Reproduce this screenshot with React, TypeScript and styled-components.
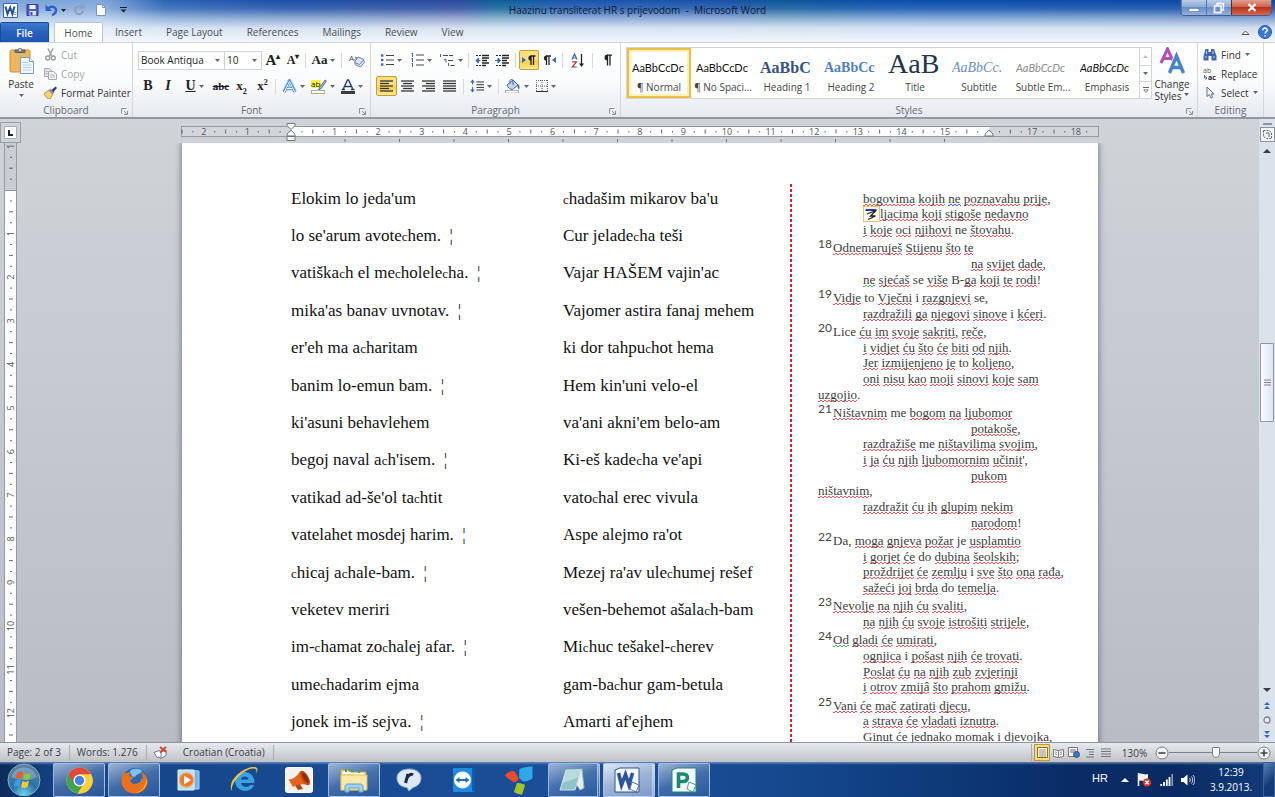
import React from 'react';
import styled, { createGlobalStyle, css } from 'styled-components';

const Global = createGlobalStyle`
  *, *::before, *::after { box-sizing: border-box; }
  html, body, #root { height: 100%; margin: 0; }
  body { font-family: "Open Sans", "Noto Sans", sans-serif; font-size: 10px; color: #333; overflow: hidden; }
  button, input, select { font: inherit; color: inherit; margin: 0; }
  button { border: 0; padding: 0; background: none; white-space: nowrap; }
  p, h1, h2 { margin: 0; font-weight: normal; font-size: inherit; }
  svg { display: block; flex: none; }
`;

const Shell = styled.div`
  display: flex;
  flex-direction: column;
  height: 100vh;
  overflow: hidden;
`;

/* ---------- window frame and tabs ---------- */

const Frame = styled.header`
  flex: none;
  background:
    linear-gradient(180deg, rgba(240, 246, 252, 0) 0, rgba(240, 246, 252, 0.16) 9px, rgba(240, 246, 252, 0.54) 18px, rgba(240, 246, 252, 0.88) 28px, #f3f7fc 42px),
    linear-gradient(90deg, #7ba3d8 0, #7fa6da 8%, #2a62b4 13%, #1a4fa5 22%, #2a489c 36%, #0a6098 39%, #1a55ac 44%, #1750a8 57%, #0b5596 61%, #0a4fae 70%, #0945a0 100%);
`;

const TitleBar = styled.div`
  display: grid;
  grid-template-columns: 1fr auto 1fr;
  align-items: center;
  height: 22px;
  padding-bottom: 2px;
`;

const QuickAccess = styled.div`
  display: flex;
  align-items: center;
  gap: 4px;
  padding-left: 1px;
`;

const QuickButton = styled.button`
  display: flex;
  align-items: center;
  justify-content: center;
  gap: 3px;
  height: 18px;
  min-width: 18px;
`;

const WindowTitle = styled.h1`
  color: #0c1a33;
  white-space: pre;
`;

const WindowButtons = styled.div`
  display: flex;
  align-self: start;
  justify-self: end;
  height: 16px;
  margin-right: 3px;
  border: 1px solid #3f5f92;
  border-top: 0;
  border-radius: 0 0 5px 5px;
  overflow: hidden;
`;

const WindowButton = styled.button<{ $close?: boolean }>`
  display: flex;
  align-items: center;
  justify-content: center;
  width: ${(p) => (p.$close ? 40 : 25)}px;
  border-left: 1px solid ${(p) => (p.$close ? '#5c2a2a' : '#5577a8')};
  background: ${(p) =>
    p.$close
      ? 'linear-gradient(180deg, #e0a090 0, #d0604c 45%, #b8321c 50%, #d4674a 100%)'
      : 'linear-gradient(180deg, #b9cde8 0, #8eabd6 45%, #668fc8 50%, #93b2dc 100%)'};
`;

const TabRow = styled.nav`
  display: flex;
  align-items: stretch;
  height: 20px;
`;

const Tab = styled.button<{ $kind?: 'file' | 'active' }>`
  padding: 0 12px;
  color: #4a4f57;
  ${(p) =>
    p.$kind === 'file' &&
    css`
      width: 49px;
      margin-right: 5px;
      color: #fff;
      font-weight: 600;
      background: linear-gradient(180deg, #3f7ad0 0, #2560bb 50%, #1f57b0 100%);
      border: 1px solid #1a4a9a;
      border-bottom: 0;
      border-radius: 2px 2px 0 0;
    `}
  ${(p) =>
    p.$kind === 'active' &&
    css`
      width: 49px;
      padding: 0;
      background: #fff;
      border: 1px solid #b9c6d8;
      border-bottom: 0;
      border-radius: 2px 2px 0 0;
    `}
`;

const TabTools = styled.div`
  display: flex;
  align-items: center;
  gap: 8px;
  margin-left: auto;
  padding-right: 3px;
`;

/* ---------- ribbon ---------- */

const Ribbon = styled.section`
  display: flex;
  flex: none;
  height: 77px;
  background: linear-gradient(180deg, #fff 0, #fbfcfd 50%, #eceff3 85%, #e6eaef 100%);
  border-top: 1px solid #c9d3e0;
  border-bottom: 2px solid #9299a3;
`;

const Group = styled.div<{ $w?: number }>`
  display: flex;
  flex-direction: column;
  flex: ${(p) => (p.$w ? `none` : '1')};
  width: ${(p) => (p.$w ? `${p.$w}px` : 'auto')};
  min-width: 0;
  border-right: 1px solid #d3d7dd;
`;

const GroupBody = styled.div<{ $tight?: boolean }>`
  display: flex;
  flex: 1;
  min-height: 0;
  padding: ${(p) => (p.$tight ? 2 : 4)}px 5px 0;
`;

const GroupFooter = styled.div`
  position: relative;
  height: 14px;
  line-height: 14px;
  text-align: center;
  color: #666c75;
`;

const Launcher = styled.button`
  position: absolute;
  right: 4px;
  bottom: 2px;
`;

const Stack = styled.div<{ $indent?: boolean }>`
  display: flex;
  flex-direction: column;
  padding-left: ${(p) => (p.$indent ? 7 : 0)}px;
`;

const BigButton = styled.button`
  display: flex;
  flex-direction: column;
  align-items: center;
  align-self: flex-start;
  line-height: 12px;
  svg:first-child { margin-bottom: 3px; }
`;

const PasteButton = styled(BigButton)`
  min-width: 32px;
  padding-top: 2px;
`;

const ChangeStyles = styled(BigButton)`
  flex: 1;
`;

const StylesLabel = styled.span`
  display: flex;
  align-items: center;
  gap: 3px;
`;

const RibbonEnd = styled.div`
  width: 11px;
`;

const SmallButton = styled.button<{ $dim?: boolean }>`
  display: flex;
  align-items: center;
  gap: 4px;
  height: 19px;
  color: ${(p) => (p.$dim ? '#a0a3a8' : '#333')};
`;

const ToolRow = styled.div`
  display: flex;
  align-items: center;
  height: 26px;
`;

const ToolButton = styled.button<{ $w?: number; $on?: boolean }>`
  display: flex;
  align-items: center;
  justify-content: center;
  gap: 3px;
  width: ${(p) => p.$w ?? 20}px;
  height: 20px;
  color: #222;
  ${(p) =>
    p.$on &&
    css`
      background: linear-gradient(180deg, #fbdf7a 0, #fbe08a 40%, #fbd04c 60%, #fde98f 100%);
      border: 1px solid #c69a3c;
      border-radius: 2px;
    `}
`;

const Divider = styled.span<{ $m?: number }>`
  width: 1px;
  height: 15px;
  margin: 0 ${(p) => p.$m ?? 4}px;
  background: #d5d8dd;
`;

const Glyph = styled.span<{ $size?: number; $italic?: boolean; $line?: string }>`
  font-family: "Liberation Serif", serif;
  font-weight: bold;
  font-size: ${(p) => p.$size ?? 14}px;
  line-height: 16px;
  font-style: ${(p) => (p.$italic ? 'italic' : 'normal')};
  text-decoration: ${(p) => p.$line ?? 'none'};
  sub, sup { font-size: 8px; line-height: 0; }
`;

const Combo = styled.select<{ $w: number }>`
  appearance: none;
  width: ${(p) => p.$w}px;
  height: 19px;
  padding: 0 2px;
  border: 1px solid #cdd1d8;
  border-radius: 0;
  background: #fff;
  color: #222;
`;

const ComboBox = styled.span`
  display: flex;
  align-items: center;
  & + & select { border-left: 0; }
  svg { margin-left: -10px; margin-right: 5px; pointer-events: none; }
`;

const Gallery = styled.div`
  display: flex;
  flex: none;
  height: 52px;
  border: 1px solid #d0d5dc;
  background: #fff;
`;

const StyleTile = styled.button<{ $on?: boolean }>`
  display: flex;
  flex-direction: column;
  align-items: center;
  width: 64px;
  padding: 0 3px;
  overflow: hidden;
  ${(p) =>
    p.$on &&
    css`
      outline: 2px solid #eebf45;
      outline-offset: -2px;
      box-shadow: inset 0 0 0 4px #fdf0b8;
    `}
`;

const Preview = styled.span<{ $font?: string; $size?: number; $color?: string; $bold?: boolean; $italic?: boolean }>`
  width: 54px;
  height: 29px;
  overflow: hidden;
  text-align: left;
  line-height: ${(p) => ((p.$size ?? 11) > 20 ? 31 : 39)}px;
  font-family: ${(p) => p.$font ?? 'Lato, sans-serif'};
  font-size: ${(p) => p.$size ?? 11}px;
  font-weight: ${(p) => (p.$bold ? 'bold' : 'normal')};
  font-style: ${(p) => (p.$italic ? 'italic' : 'normal')};
  color: ${(p) => p.$color ?? '#111'};
`;

const TileLabel = styled.span`
  line-height: 20px;
  white-space: nowrap;
  color: #444;
`;

const GalleryScroll = styled.div`
  display: grid;
  grid-template-rows: 1fr 1fr 1fr;
  width: 12px;
  border-left: 1px solid #d0d5dc;
  button { display: flex; align-items: center; justify-content: center; }
  button + button { border-top: 1px solid #d0d5dc; }
`;

/* ---------- document area ---------- */

const Workspace = styled.main`
  display: grid;
  grid-template-columns: 21px 1fr 16px;
  grid-template-rows: 24px 1fr;
  flex: 1;
  min-height: 0;
  background: linear-gradient(180deg, #d0d3d8 0, #c6cad1 40%, #b9bcc4 100%);
`;

const Corner = styled.button`
  align-self: end;
  width: 21px;
  height: 21px;
  border: 1px solid #9a9ea6;
  display: flex;
  align-items: center;
  justify-content: center;
`;

const RulerRow = styled.div`
  display: flex;
  justify-content: center;
  padding-top: 3px;
`;

const SideRuler = styled.div`
  overflow: hidden;
  padding-left: 4px;
`;

const Canvas = styled.div`
  display: flex;
  justify-content: center;
  align-items: flex-start;
  overflow: hidden;
  min-height: 0;
`;

const Scrollbar = styled.div`
  grid-column: 3;
  grid-row: 1 / 3;
  display: flex;
  flex-direction: column;
  align-items: center;
  background: #dbe2ec;
  button { display: flex; align-items: center; justify-content: center; width: 15px; height: 15px; flex: none; }
`;

const SplitHandle = styled.span`
  width: 9px;
  height: 2px;
  margin-top: 4px;
  background: #8e949e;
`;

const RulerToggle = styled.button`
  margin: 2px 0 1px;
  border: 1px solid #8e949e;
  background: #f2f4f8;
`;

const Space = styled.span<{ $grow: number }>`
  flex: ${(p) => p.$grow};
`;

const Thumb = styled.div`
  display: flex;
  align-items: center;
  justify-content: center;
  width: 14px;
  height: 79px;
  border: 1px solid #8b96a8;
  border-radius: 1px;
  background: linear-gradient(90deg, #fafbfe, #dfe5f2);
`;

const Paper = styled.article`
  display: grid;
  grid-template-columns: 272px 227px 3px 1fr;
  flex: none;
  width: 916px;
  padding: 37px 16px 40px 109px;
  background: #fff;
  box-shadow: 0 0 6px 1px rgba(60, 64, 72, 0.55);
`;

const VerseColumn = styled.div`
  display: grid;
  grid-auto-rows: 1fr;
  align-items: center;
  height: 561px;
  font-family: "Liberation Serif", serif;
  font-size: 17px;
  color: #111;
  white-space: pre;
`;

const SmallC = styled.span`
  font-size: 13px;
`;

const DottedRule = styled.div`
  align-self: stretch;
  width: 2px;
  margin-top: 4px;
  background: repeating-linear-gradient(180deg, #cc2430 0 3px, transparent 3px 5px);
`;

const Translation = styled.div`
  display: flex;
  flex-direction: column;
  height: 565px;
  padding: 11px 0 0 25px;
  font-family: "Liberation Serif", serif;
  font-size: 13px;
  line-height: 16px;
  color: #3c3c3c;
  white-space: pre;
`;

const Line = styled.p<{ $in: number }>`
  display: flex;
  align-items: flex-end;
  flex: ${(p) => (p.$in === 1 ? 7 : 6)} 0 0;
  min-height: 0;
  padding-left: ${(p) => [0, 0, 45, 153][p.$in]}px;
`;

const VerseNo = styled.span`
  width: 15px;
  padding-bottom: 4px;
  font-family: Lato, "Open Sans", sans-serif;
  font-size: 12px;
  color: #444;
`;

const Marked = styled.span<{ $c: string }>`
  --c: ${(p) => p.$c};
  background:
    linear-gradient(90deg, var(--c) 50%, transparent 50%) 0 100% / 4px 1px repeat-x,
    linear-gradient(90deg, transparent 50%, var(--c) 50%) 0 calc(100% - 1px) / 4px 1px repeat-x;
`;

const PasteBadge = styled.button`
  width: 17px;
  height: 16px;
  border: 1px solid #e5c66b;
  background: #fffdf3;
`;

/* ---------- status bar ---------- */

const StatusBar = styled.footer`
  display: flex;
  align-items: center;
  flex: none;
  height: 20px;
  border-top: 1px solid #8d939c;
  background: linear-gradient(180deg, #e6e9ee 0, #d3d6da 50%, #c0c2c6 100%);
  color: #3b3f45;
`;

const StatusItem = styled.button`
  height: 15px;
  line-height: 15px;
  padding: 0 8px 0 7px;
  border-right: 1px solid #a9adb3;
`;

const ProofButton = styled.button`
  padding: 0 8px 0 6px;
`;

const ViewButtons = styled.div`
  display: flex;
  margin-left: auto;
  padding-left: 2px;
  border-left: 1px solid #a9adb3;
`;

const ViewButton = styled.button<{ $on?: boolean }>`
  display: flex;
  align-items: center;
  justify-content: center;
  width: 16px;
  height: 17px;
  ${(p) =>
    p.$on &&
    css`
      border: 1px solid #c6932f;
      background: #fbdc7c;
    `}
`;

const ZoomLabel = styled.button`
  width: 41px;
  text-align: center;
`;

const ZoomTools = styled.div`
  display: flex;
  align-items: center;
  padding-right: 4px;
`;

const ZoomSlider = styled.input`
  appearance: none;
  width: 88px;
  height: 14px;
  background: linear-gradient(#7d828a, #7d828a) center / 100% 1px no-repeat;
  &::-webkit-slider-thumb {
    appearance: none;
    width: 8px;
    height: 11px;
    border: 1px solid #7b8088;
    border-radius: 1px 1px 4px 4px;
    background: #f7f8fa;
  }
`;

/* ---------- task bar ---------- */

const TaskBar = styled.nav`
  display: flex;
  flex: none;
  height: 35px;
  color: #fff;
  background:
    linear-gradient(180deg, rgba(140, 175, 215, 0.65) 0, rgba(140, 175, 215, 0) 3px),
    linear-gradient(90deg, #0d2b5c 0, #15458a 5%, #1a4f98 45%, #164a90 60%, #0e3c7c 72%, #0a2c66 84%, #0a2a62 92%, #123c7c 100%);
`;

const StartButton = styled.button`
  display: flex;
  align-items: center;
  justify-content: center;
  width: 48px;
  margin-right: 5px;
`;

const TaskButton = styled.button<{ $open?: boolean; $front?: boolean; $stack?: boolean }>`
  display: flex;
  align-items: center;
  justify-content: center;
  width: 52px;
  height: 34px;
  margin: 1px 3px 0 0;
  ${(p) =>
    p.$open &&
    css`
      border: 1px solid rgba(190, 210, 235, 0.75);
      border-radius: 2px;
      background: ${p.$front
        ? 'linear-gradient(160deg, #dfe7f3 0, #9db4d6 50%, #7f9cc8 100%)'
        : 'linear-gradient(160deg, rgba(200,215,235,.75) 0, rgba(110,145,195,.5) 50%, rgba(70,110,170,.4) 100%)'};
    `}
  ${(p) =>
    p.$stack &&
    css`
      border-right-width: 3px;
      border-right-style: double;
      padding-right: 2px;
    `}
`;

const Tray = styled.div`
  display: flex;
  align-items: center;
  gap: 8px;
  margin-left: auto;
`;

const Language = styled.button`
  margin: 0 5px 3px 0;
  font-family: "Liberation Sans", sans-serif;
  font-size: 11px;
`;

const Clock = styled.button`
  width: 56px;
  line-height: 15px;
  text-align: center;
`;

const ShowDesktop = styled.button`
  align-self: stretch;
  width: 12px;
  margin-left: -4px;
  border: 1px solid #3c6296;
  background: linear-gradient(135deg, #5a82b6, #143b78 60%);
`;

/* ---------- icons ---------- */

const Down = ({ c = '#666' }: { c?: string }) => (
  <svg width="5" height="3" viewBox="0 0 5 3"><path d="M0 0h5L2.500 3z" fill={c} /></svg>
);

const Svg = ({ w = 16, h = 16, vb, children }: { w?: number; h?: number; vb?: string; children: React.ReactNode }) => (
  <svg width={w} height={h} viewBox={vb ?? `0 0 ${w} ${h}`} fill="none" aria-hidden="true">{children}</svg>
);

const WordMark = () => (
  <Svg w={15} h={15}>
    <path d="M0.500 0.500h14v14h-14z" fill="#fff" stroke="#3b66a8" />
    <path d="M2.500 3.500l2 7.500L7.200 4.500l2.200 6.500L11.500 3.500" stroke="#1f4f9c" strokeWidth="2" />
    <path d="M10.500 9.500h3M10.500 11.500h3" stroke="#7c9ccc" />
  </Svg>
);
const Save = () => (
  <Svg w={13} h={12}>
    <path d="M1 .5h11v11H1z" fill="#4c5fc0" stroke="#2e3f95" />
    <path d="M3.500 1h6v4h-6z" fill="#eef2ff" /><path d="M3.500 7h6.500v4.500H3.500z" fill="#dfe4f5" /><path d="M4.500 8h2v3h-2z" fill="#3a4aa0" />
  </Svg>
);
const Undo = () => (
  <Svg w={13} h={12}>
    <path d="M3 4.500C6 1.500 11 2.500 11 6.500c0 2-1.500 3.500-4 4.500" stroke="#2e62c2" strokeWidth="2.400" />
    <path d="M0.500 .5v6.500h6.500z" fill="#2e62c2" />
  </Svg>
);
const Redo = () => (
  <Svg w={12} h={12}>
    <path d="M8.500 3A4 4 0 1 0 10 6.500" stroke="#8ba0bf" strokeWidth="2" /><path d="M6 4.500h5.500V-.5z" fill="#8ba0bf" />
  </Svg>
);
const NewPage = () => (
  <Svg w={10} h={12}><path d="M.5.5h6l3 3v8h-9z" fill="#fff" stroke="#7a92b5" /><path d="M6.500.5v3h3" stroke="#7a92b5" /></Svg>
);
const Customize = () => (
  <Svg w={7} h={6}><path d="M0 .5h7" stroke="#222" /><path d="M.5 2.500h6l-3 3z" fill="#222" /></Svg>
);
const MoreIcon = () => (
  <Svg w={6} h={6}><path d="M0 .5h6" stroke="#666" /><path d="M.8 2.800h4.400L3 5.500z" stroke="#666" strokeWidth=".8" /></Svg>
);
const LauncherIcon = () => (
  <Svg w={7} h={7}><path d="M.5 5.500v-5h5M3 3l3 3M6.500 3v3.500H3" stroke="#8b9099" /></Svg>
);
const PasteIcon = () => (
  <Svg w={25} h={28}>
    <rect x="1" y="3" width="20" height="22" rx="1.500" fill="#edb75d" stroke="#c98d33" />
    <path d="M6 5.500V3h2.500a3 3 0 0 1 5 0H16v2.500z" fill="#7d7f86" stroke="#5d5f66" /><circle cx="11" cy="3" r="1" fill="#fff" />
    <path d="M11.500 10.500h9l4 4v12h-13z" fill="#f5f9fe" stroke="#7b9cc7" /><path d="M20.500 10.500v4h4" stroke="#7b9cc7" fill="#fff" />
    <path d="M13.500 15.500h6M13.500 18h9M13.500 20.500h9M13.500 23h9" stroke="#b4cbe6" />
  </Svg>
);
const CutIcon = () => (
  <Svg w={13} h={13}>
    <path d="M4 0.500l4 8M9 .5l-4 8" stroke="#9b9ea4" strokeWidth="1.500" />
    <circle cx="3.700" cy="10" r="2" stroke="#9b9ea4" strokeWidth="1.400" /><circle cx="9.300" cy="10" r="2" stroke="#9b9ea4" strokeWidth="1.400" />
  </Svg>
);
const CopyIcon = () => (
  <Svg w={13} h={12}>
    <path d="M.5.5h5l2 2v6h-7z" fill="#e4e5e8" stroke="#a5a8ae" /><path d="M4.500 3.500h5l3 2.500v5.500h-8z" fill="#f1f1f3" stroke="#a5a8ae" />
    <path d="M6 7h5M6 9h5M2 3.500h2.500M2 5.500h2" stroke="#b9bbc0" />
  </Svg>
);
const PainterIcon = () => (
  <Svg w={13} h={13}>
    <path d="M0 8l5-4 4 4-3 5c-3 0-4-2-6-5z" fill="#f3d36a" stroke="#b08d2c" strokeWidth=".8" />
    <path d="M4.500 4.500l2-2 4 4-2 2z" fill="#8891a8" /><path d="M7.500 4l4-3.500L13 2 9.500 6z" fill="#39405a" />
  </Svg>
);
const ClearFormat = () => (
  <Svg w={16} h={16}>
    <text x="0" y="9" fontFamily="Open Sans, sans-serif" fontSize="8" fill="#445">Aa</text>
    <path d="M9 5l5 2 1.500 3-4 5-5-2-1-2.500z" fill="#dfe6f3" stroke="#6f83ab" /><path d="M5.500 10.500l5 2 4.500-5" stroke="#6f83ab" />
  </Svg>
);
const TextEffects = () => (
  <Svg w={15} h={15}><path d="M2 13L7.500 2 13 13M4.500 9.500h6" stroke="#9ccaf0" strokeWidth="4" strokeLinejoin="round" /><path d="M2 13L7.500 2 13 13M4.500 9.500h6" stroke="#3f86cc" strokeWidth="2.200" /><path d="M2.300 13L7.500 2.500 12.700 13M5 9.500h5" stroke="#fff" strokeWidth="1" /></Svg>
);
const Highlighter = () => (
  <Svg w={16} h={15}>
    <rect x="0" y="1" width="10" height="8" fill="#f7f24a" />
    <text x="0" y="8" fontFamily="Open Sans, sans-serif" fontSize="8" fill="#222">ab</text>
    <path d="M14 1L8.500 8.500 7.500 11l2.500-1.300L15.500 2z" fill="#9db8da" stroke="#44608c" strokeWidth=".8" />
    <rect x=".5" y="11.500" width="13" height="3" fill="#fff" stroke="#a9b48a" />
  </Svg>
);
const FontColor = () => (
  <Svg w={14} h={15}>
    <path d="M2 10.500L6.500 1h1L12 10.500M4 7.500h6M.8 10.500H4M9.800 10.500h3.700" stroke="#27406e" strokeWidth="1.400" /><rect y="12" width="14" height="3" fill="#3a3a44" />
  </Svg>
);
const Bars = ({ rows, c = '#333' }: { rows: [number, number][]; c?: string }) => (
  <Svg w={13} h={12}>{rows.map(([x, w], i) => <path key={i} d={`M${x} ${i * 2.5 + 1}h${w}`} stroke={c} strokeWidth="1.300" />)}</Svg>
);
const Bullets = () => (
  <Svg w={13} h={12}>
    {[1.500, 6, 10.500].map((y) => <g key={y}><rect x="0" y={y - 1.200} width="2.400" height="2.400" fill="#3f63b0" /><path d={`M5 ${y}h8`} stroke="#444" /></g>)}
  </Svg>
);
const Numbering = () => (
  <Svg w={13} h={14}>
    {[2, 7, 12].map((y) => <g key={y}><path d={`M1.500 ${y - 2}v4M.500 ${y - 1.500}h1`} stroke="#3f63b0" /><path d={`M5 ${y}h8`} stroke="#444" /></g>)}
  </Svg>
);
const Multilevel = () => (
  <Svg w={15} h={13}>
    <path d="M.5 0v3M4 6l2-1v3.500M8.500 9v3" stroke="#3f63b0" /><path d="M3 1.500h10M8 6.500h6M10.500 11.500h4" stroke="#444" strokeDasharray="5 1" />
  </Svg>
);
const Indent = ({ out }: { out?: boolean }) => (
  <Svg w={14} h={13}>
    <path d="M1 1.500h5M1 11.500h5" stroke="#222" strokeDasharray="2 1" /><path d="M7 1.500h7M7 4h7M7 6.500h5M7 9h7M7 11.500h4" stroke="#222" strokeWidth="1.300" />
    <path d={out ? 'M5.500 6.500H2M3.500 4L.8 6.500 3.500 9z' : 'M0 6.500h4M3 4l2.700 2.500L3 9z'} stroke="#3566c0" fill="#3566c0" />
  </Svg>
);
const Pilcrow = () => (
  <Svg w={10} h={12}><path d="M5 1.200h5M5.500 1v10.500M8 1v10.500" stroke="#222" strokeWidth="1.300" /><path d="M5.500.6a2.800 2.800 0 0 0 0 5.900z" fill="#222" /></Svg>
);
const Direction = ({ rtl }: { rtl?: boolean }) => (
  <Svg w={14} h={12}>
    <path d={rtl ? 'M14 3v6L10 6z' : 'M0 3v6l4-3z'} fill="#3566c0" />
    <g transform={rtl ? 'translate(0 1)' : 'translate(4.500 1)'}><path d="M4 1h5M4.500 1v9M7 1v9" stroke="#222" strokeWidth="1.300" /><path d="M4.500.5a2.500 2.500 0 0 0 0 5.200z" fill="#222" /></g>
  </Svg>
);
const SortIcon = () => (
  <Svg w={13} h={15}>
    <path d="M1 6.500L3.500 1 6 6.500M2 5h3" stroke="#3566c0" strokeWidth="1.200" /><path d="M1.200 8.800h4.300L1.200 14h4.600" stroke="#a03a4a" strokeWidth="1.200" />
    <path d="M10.500 1v11" stroke="#222" strokeWidth="1.300" /><path d="M8 10.500h5L10.500 14z" fill="#222" />
  </Svg>
);
const Spacing = () => (
  <Svg w={14} h={14}>
    <path d="M2.500 1.500v11" stroke="#3566c0" strokeDasharray="4 2.500" /><path d="M.2 3.500L2.500.5l2.300 3zM.2 10.500l2.300 3 2.300-3z" fill="#3566c0" />
    <path d="M6.500 3h7.500M6.500 5.700h7.500M6.500 8.400h7.500M6.500 11h7.500" stroke="#333" />
  </Svg>
);
const Shading = () => (
  <Svg w={16} h={14}>
    <path d="M2 6l6-5 5 5-5.500 4.500c-2 0-5-2-5.500-4.500z" fill="#c5d7ee" stroke="#3e67a6" /><path d="M5 5V1.500C6 0 8 0 8 2v4" stroke="#3e67a6" />
    <path d="M13 5c1.500 1.500 2 3.500 1 5.500-1.500-1-1.500-3.500-1-5.500z" fill="#3e67a6" /><rect x=".5" y="11.500" width="13" height="2.500" fill="#fff" stroke="#98a0ac" strokeWidth=".8" />
  </Svg>
);
const Borders = () => (
  <Svg w={12} h={12}><path d="M.5 0v11M11.500 0v11M6 0v11M0 .5h12M0 6h12" stroke="#666" strokeDasharray="1 1" /><path d="M0 11.500h12" stroke="#333" /></Svg>
);
const ChangeStylesIcon = () => (
  <Svg w={26} h={28}>
    <path d="M2 16L8.500 2 15 16M4.500 11.500h8" stroke="#b24fb4" strokeWidth="3" /><path d="M10 26L17.500 9 25 26M13 20.500h9.500" stroke="#f6f8fc" strokeWidth="5" />
    <path d="M10.500 26L17.500 9 24.500 26M13 20.500h9" stroke="#4a83cc" strokeWidth="3.400" />
  </Svg>
);
const Binoculars = () => (
  <Svg w={14} h={12}>
    <path d="M2.500 0h3v3h2.500V0h3l2.500 7v4.500H8.500V7h-3v4.500H.5V7z" fill="#3e67ae" /><path d="M2 8h2M10 8h2M3.500 2v3M10 2v3" stroke="#bcd0ee" />
  </Svg>
);
const ReplaceIcon = () => (
  <Svg w={14} h={14}>
    <text x="0" y="6" fontFamily="Open Sans, sans-serif" fontSize="7" fill="#555">ab</text>
    <text x="5" y="13" fontFamily="Open Sans, sans-serif" fontSize="7" fontWeight="700" fill="#222">ac</text>
    <path d="M1.500 8v3H4M2.500 9.500l1.500 1.500-1.500 1.500" stroke="#3566c0" />
  </Svg>
);
const Cursor = () => (
  <Svg w={14} h={13}><path d="M4 1v9.500l2.300-2L8 12l1.700-.8L8.200 8H11z" fill="#fff" stroke="#5b6f96" /></Svg>
);
const Help = () => (
  <Svg w={14} h={14}>
    <circle cx="7" cy="7" r="6.500" fill="#3a78d4" stroke="#2a5aa8" /><path d="M4.800 5.200c0-3 4.600-2.700 4.400 0C9.100 6.500 7.200 6.800 7.200 8.500M7.200 10v1.600" stroke="#fff" strokeWidth="1.500" />
  </Svg>
);
const ProofIcon = () => (
  <Svg w={15} h={13}>
    <path d="M1 6.500l5-2 2 1.500 5-2v5.500l-5 3-2-1.500-2 .5z" fill="#fff" stroke="#6379a8" /><path d="M8 6v6" stroke="#6379a8" /><path d="M7 1l6 5M13 1L7 6.500" stroke="#d2452c" strokeWidth="1.800" />
  </Svg>
);

const Orb = () => (
  <Svg w={34} h={34}>
    <defs><radialGradient id="orb" cx=".5" cy=".95" r=".9"><stop offset="0" stopColor="#6fd2ee" /><stop offset=".45" stopColor="#2a72a8" /><stop offset="1" stopColor="#5c7f9c" /></radialGradient></defs>
    <circle cx="17" cy="17" r="16" fill="url(#orb)" stroke="#7fb0cc" />
    <path d="M4 14a13.500 13.500 0 0 1 26 0c-7 4-19 4-26 0z" fill="#fff" opacity=".25" />
    <path d="M10 10c2-1.500 4-1.500 6-.5l-1.500 6.300c-2-1-4-1-6 .4z" fill="#ee5a2a" /><path d="M17.500 10.200c2 1 4 1 6.500-.2l-1.500 6.200c-2.500 1-4.500 1-6.500 0z" fill="#8cc63f" />
    <path d="M8 17.700c2-1.400 4-1.400 6-.4L12.500 23.500c-2-1-4-1-6 .3z" fill="#3f9be8" /><path d="M15.500 18c2 1 4 1 6.500 0l-1.500 6c-2.500 1.200-4.500 1.200-6.500 0z" fill="#fbc82e" />
  </Svg>
);
const Chrome = () => (
  <Svg w={27} h={27}>
    <circle cx="13.500" cy="13.500" r="13" fill="#fbd03b" />
    <path d="M13.500 13.500L2.300 7a13 13 0 0 0 9.500 19.300L17.500 17z" fill="#3fa450" />
    <path d="M13.500 7H25A13 13 0 0 1 11.800 26.400L19 16z" fill="#fbd03b" /><path d="M2.300 7A13 13 0 0 1 24.800 7.200H13.500L7.600 16z" fill="#dd4a3a" />
    <circle cx="13.500" cy="13.500" r="6" fill="#fff" /><circle cx="13.500" cy="13.500" r="4.700" fill="#4285e8" />
  </Svg>
);
const Firefox = () => (
  <Svg w={27} h={27}>
    <circle cx="14" cy="12.500" r="11.500" fill="#2a67b4" /><path d="M9 4c3-3 9-3 12 0-1 3-6 3-7 6-3 0-5-3-5-6z" fill="#7cc4ee" />
    <path d="M2.500 4.500c.5 1 1 2 2 2.300C6 5.500 8 5 10 5.500c-1.500 1-2 2-1.500 3.500 1 .5 3 .3 4 1-.5 2-3 2.500-3 4 1 3 5 3.500 8 2 2-1 3-3 2.500-5.500 1 .5 1.500 1.500 2 2.500.5-3-1-6.500-3-8.500 5 2 7.500 6 7.500 10.500C26.500 22 20 26.500 13.500 26.500 6 26.500.5 21 .5 14c0-3.500 1-7 2-9.500z" fill="#e9701c" />
    <path d="M26 11c1 7-4.500 15-12.500 15 6-1 11-5 12.500-15z" fill="#fcc83a" />
  </Svg>
);
const MediaPlayer = () => (
  <Svg w={24} h={22}>
    <path d="M8 1l14 1v18H9z" fill="#6fb7e2" stroke="#a9d8f2" /><path d="M1 1h16v20H1z" fill="#bfe0f4" stroke="#e3f3fc" />
    <circle cx="9.500" cy="11" r="7.500" fill="#ee7a22" /><circle cx="9.500" cy="11" r="7" stroke="#fbb27a" /><path d="M7 6.500v9l7-4.500z" fill="#fff" />
  </Svg>
);
const Explorer = () => (
  <Svg w={28} h={27}>
    <path d="M5 14.500a9.500 10 0 0 1 19.500 1.500H11c.5 4.500 7.500 5 9 2h4.200C21.500 26 6.500 26.500 5 14.500zM11 12.500h7.500c-.5-4-7-4-7.500 0z" fill="#3aa0e4" fillRule="evenodd" />
    <path d="M26 2.500c-4-4-19 5-23.500 16-1.500 4-.5 7 3 6.500C2 25.500-.5 22 1.500 16 5 5.500 23-3.500 27 1c1 2 0 4-1 6 .5-2 .8-3.500 0-4.500z" fill="#f1c53c" />
  </Svg>
);
const Megaphone = () => (
  <Svg w={28} h={26}>
    <rect x=".5" y=".5" width="27" height="25" rx="2" fill="#f7f2ee" stroke="#fff" /><path d="M3.500 12.500c5 0 8-3 12-8.500L24 18c-7-1.500-11-1-16 2z" fill="#e2641e" />
    <ellipse cx="20" cy="11" rx="3.500" ry="8" transform="rotate(-30 20 11)" fill="#c04a12" /><ellipse cx="20.500" cy="10.800" rx="2" ry="5.500" transform="rotate(-30 20.500 10.800)" fill="#84300e" /><path d="M10 18.500l5-1.500 3 5-5 1z" fill="#b8460f" />
  </Svg>
);
const Folder = () => (
  <Svg w={30} h={27}>
    <path d="M2 3h7l2 2h16v18H2z" fill="#f3dc8a" stroke="#c9a94c" /><path d="M4 6h10M15 7h10" stroke="#fff" strokeWidth="2" /><path d="M7 2v3M13 2.500v3M20 3v3" stroke="#4a9a54" strokeWidth="2" />
    <path d="M2 8h26v15H2z" fill="#fae9a8" stroke="#d8bd68" /><path d="M6 25v-5c0-2 1-3 3-3h12c2 0 3 1 3 3v5h-4v-4H10v4z" fill="#9fd3f0" stroke="#5aa3d0" />
  </Svg>
);
const ChatR = () => (
  <Svg w={26} h={24}>
    <path d="M13 1c7 0 12 3.500 12 9s-4 8.500-8 9.500L13 23l-2-3.500C5 19 1 15.500 1 10S6 1 13 1z" fill="#dfe9f4" stroke="#8fb0d4" /><path d="M9.500 15l2.500-9M11 10c2-3.500 4-4.500 6-3" stroke="#1b2c44" strokeWidth="3" />
  </Svg>
);
const TeamViewer = () => (
  <Svg w={24} h={26}>
    <path d="M1 1h19l3 2v22H1z" fill="#1f8ae0" /><path d="M20 1l3 2v22l-3-1z" fill="#0d5cac" /><circle cx="10.500" cy="13" r="8.500" fill="#fff" />
    <path d="M3.500 13l4-3v2h6v-2l4 3-4 3v-2h-6v2z" fill="#1f6cb8" />
  </Svg>
);
const Petals = () => (
  <Svg w={28} h={29}>
    <path d="M14 12L14.500 3c4-2 9-2.500 13-2.500V12c-3 3-8 4-10 3z" fill="#2fa8ea" /><path d="M0 9c3-3 6-4 9-4 2 2 4 5 4.500 8-2 3-3 3-5 3C5 14 2 12 0 9z" fill="#ee4b2c" />
    <path d="M9 26l3-9c3 0 7 1 8 2-1 4-2 7-3 9.500-3 0-6-1-8-2.500z" fill="#a3c52c" />
  </Svg>
);
const Notebook = () => (
  <Svg w={26} h={26}>
    <path d="M8 3l15-1 2 19-4 2z" fill="#e6eeee" stroke="#9fb4b8" /><path d="M7 3h15l-6 20H1z" fill="#8fc3c9" stroke="#c8e2e4" /><path d="M7 3h15l-2 7C15 12 9 14 3 16z" fill="#c9e4e6" opacity=".7" />
  </Svg>
);
const OfficeTile = ({ c, d }: { c: string; d: string }) => (
  <Svg w={27} h={27}>
    <path d="M1 3l5-2h19v24H1z" fill="#f5f8fc" stroke={c} /><path d={d} stroke={c} strokeWidth="3.600" /><path d="M18 15l7 3-3 7-6-3z" fill="#fff" stroke={c} strokeWidth=".8" />
  </Svg>
);

/* ---------- content ---------- */

const leftLines = [
  "Elokim lo jeda'um", "lo se'arum avotechem.  ¦", 'vatiškach el mecholelecha.  ¦', "mika'as banav uvnotav.  ¦", "er'eh ma acharitam",
  'banim lo-emun bam.  ¦', "ki'asuni behavlehem", "begoj naval ach'isem.  ¦", "vatikad ad-še'ol tachtit", 'vatelahet mosdej harim.  ¦',
  'chicaj achale-bam.  ¦', 'veketev meriri', 'im-chamat zochalej afar.  ¦', 'umechadarim ejma', 'jonek im-iš sejva.  ¦',
];
const middleLines = [
  "chadašim mikarov ba'u", 'Cur jeladecha teši', "Vajar HAŠEM vajin'ac", 'Vajomer astira fanaj mehem', 'ki dor tahpuchot hema',
  "Hem kin'uni velo-el", "va'ani akni'em belo-am", "Ki-eš kadecha ve'api", 'vatochal erec vivula', "Aspe alejmo ra'ot",
  "Mezej ra'av ulechumej rešef", 'vešen-behemot ašalach-bam', 'Michuc tešakel-cherev', 'gam-bachur gam-betula', "Amarti af'ejhem",
];

/* [ ] marks red, ‹ › blue and { } green proofing underlines; the number is the indent level */
const translation: [number, string, number?][] = [
  [2, '[bogovima] [kojih] ‹ne› [poznavahu] [prije],'], [2, '@[ljacima] [koji] [stigoše] [nedavno]'], [2, '[i] [koje] [oci] [njihovi] ne [štovahu].'],
  [1, '[Odnemaruješ] [Stijenu] [što] [te]', 18], [3, '[na] [svijet] [dade],'], [2, '{ne} [sjećaš] se [više] B-[ga] [koji] [te] [rodi]!'],
  [1, '[Vidje] to [Vječni] i [razgnjevi] se,', 19], [2, '[razdražili] [ga] [njegovi] [sinove] i [kćeri].'],
  [1, 'Lice [ću] [im] [svoje] [sakriti], [reče],', 20], [2, '[i] [vidjet] [ću] [što] [će] [biti] ‹od› [njih].'], [2, '[Jer] [izmijenjeno] [je] to [koljeno],'],
  [2, '[oni] [nisu] [kao] [moji] [sinovi] [koje] [sam]'], [0, '[uzgojio].'],
  [1, '[Ništavnim] me [bogom] [na] [ljubomor]', 21], [3, '[potakoše],'], [2, '[razdražiše] me [ništavilima] [svojim],'], [2, "[i] [ja] [ću] [njih] [ljubomornim] [učinit]',"],
  [3, '[pukom]'], [0, '[ništavnim],'], [2, '[razdražit] [ću] [ih] [glupim] [nekim]'], [3, '[narodom]!'],
  [1, 'Da, [moga] [gnjeva] [požar] je [usplamtio]', 22], [2, '[i] [gorjet] [će] do [dubina] [šeolskih];'], [2, '[proždrijet] [će] [zemlju] i [sve] [što] [ona] [rađa],'], [2, '[sažeći] [joj] [brda] do [temelja].'],
  [1, '[Nevolje] [na] [njih] [ću] [svaliti],', 23], [2, '[na] [njih] [ću] [svoje] [istrošiti] [strijele],'],
  [1, '{Od} [gladi] [će] [umirati],', 24], [2, '[ognjica] i [pošast] [njih] [će] [trovati].'], [2, '[Poslat] [ću] [na] [njih] [zub] [zvjerinji]'], [2, '[i] [otrov] [zmijâ] [što] [prahom] [gmižu].'],
  [1, '[Vani] [će] [mač] [zatirati] [djecu],', 25], [2, '[a] [strava] [će] [vladati] [iznutra].'], [2, '[Ginut] [će] [jednako] [momak] i [djevojka],'],
];

const colors: Record<string, string> = { '[': '#e0565c', '‹': '#4a5fe0', '{': '#4fae62' };

const Rich = ({ text }: { text: string }) => (
  <span>
    {text.split(/(\[[^\]]*\]|‹[^›]*›|\{[^}]*\})/).map((part, i) =>
      colors[part[0]] ? <Marked key={i} $c={colors[part[0]]}>{part.slice(1, -1)}</Marked> : part,
    )}
  </span>
);

const Verse = ({ text }: { text: string }) => (
  <p>{text.split(/(c(?=h))/).map((part, i) => (part === 'c' ? <SmallC key={i}>c</SmallC> : part))}</p>
);

const CM = 43.6;
const HRuler = () => (
  <Svg w={918} h={20}>
    <rect x=".5" y="4.500" width="917" height="10" fill="#d3d6db" stroke="#9599a1" />
    <rect x="110" y="5" width="698" height="9" fill="#fff" />
    {Array.from({ length: 21 }, (_, i) => i - 2).map((n) => {
      const x = 110 + n * CM;
      return (
        <g key={n}>
          {n !== 0 && n !== 16 && <text x={x} y="13" textAnchor="middle" fontSize="9" fontFamily="Open Sans, sans-serif" fill="#555">{Math.abs(n)}</text>}
          <path d={`M${x - CM / 4} 9v1.500M${x + CM / 4} 9v1.500M${x - CM / 2} 7.500v4`} stroke="#666" />
        </g>
      );
    })}
    {Array.from({ length: 12 }, (_, i) => 164 + i * 54.5).map((x) => <path key={x} d={`M${x} 17v3`} stroke="#777" />)}
    <path d="M106 1.500h8v2l-4 4-4-4zM106 14v-2l4-4 4 4v2zM106 14.500h8v4h-8z" fill="#f4f5f7" stroke="#777" />
    <path d="M804 14v-2l4-4 4 4v2z" fill="#f4f5f7" stroke="#777" />
  </Svg>
);
const VRuler = () => (
  <Svg w={13} h={800}>
    <rect x=".5" y="-1" width="12" height="802" fill="#fdfdfe" stroke="#9599a1" /><rect x="1" y="0" width="11" height="47" fill="#c9cdd5" /><path d="M1 47.500h11" stroke="#9599a1" />
    {Array.from({ length: 18 }, (_, i) => i - 1).map((n) => {
      const y = 47 + n * CM;
      return (
        <g key={n}>
          {n !== 0 && <text x="0" y="0" transform={`translate(10 ${y}) rotate(-90)`} textAnchor="middle" fontSize="9" fontFamily="Open Sans, sans-serif" fill="#555">{Math.abs(n)}</text>}
          <path d={`M6 ${y - CM / 4}h2M6 ${y + CM / 4}h2M5 ${y + CM / 2}h4`} stroke="#666" />
        </g>
      );
    })}
  </Svg>
);

const serif = '"Liberation Serif", serif';
const tiles = [
  { name: '¶ Normal', sample: 'AaBbCcDc', on: true },
  { name: '¶ No Spaci...', sample: 'AaBbCcDc' },
  { name: 'Heading 1', sample: 'AaBbC', font: serif, size: 16, color: '#34527f', bold: true },
  { name: 'Heading 2', sample: 'AaBbCc', font: serif, size: 14, color: '#4f81bd', bold: true },
  { name: 'Title', sample: 'AaB', font: serif, size: 28, color: '#22334f' },
  { name: 'Subtitle', sample: 'AaBbCc.', font: serif, size: 14, color: '#6a8fc0', italic: true },
  { name: 'Subtle Em...', sample: 'AaBbCcDc', color: '#8b8b8b', italic: true },
  { name: 'Emphasis', sample: 'AaBbCcDc', italic: true },
];

const Footer = ({ label, launcher = true }: { label: string; launcher?: boolean }) => (
  <GroupFooter>{label}{launcher && <Launcher aria-label={`${label} options`}><LauncherIcon /></Launcher>}</GroupFooter>
);

export default function App() {
  return (
    <Shell>
      <Global />
      <Frame>
        <TitleBar>
          <QuickAccess>
            <QuickButton aria-label="Word"><WordMark /></QuickButton>
            <QuickButton aria-label="Save"><Save /></QuickButton>
            <QuickButton aria-label="Undo"><Undo /><Down c="#222" /></QuickButton>
            <QuickButton aria-label="Redo"><Redo /></QuickButton>
            <QuickButton aria-label="New"><NewPage /></QuickButton>
            <QuickButton aria-label="Customize"><Customize /></QuickButton>
          </QuickAccess>
          <WindowTitle>Haazinu transliterat HR s prijevodom  -  Microsoft Word</WindowTitle>
          <WindowButtons>
            <WindowButton aria-label="Minimize"><Svg w={12} h={12}><rect x="1" y="6.500" width="10" height="3" fill="#fff" stroke="#44618f" strokeWidth=".5" /></Svg></WindowButton>
            <WindowButton aria-label="Restore"><Svg w={12} h={12}><path d="M4 1.500h6.500V8H4z" stroke="#fff" strokeWidth="1.300" /><path d="M1.500 4H8v6.500H1.500z" fill="#6d90c6" stroke="#fff" strokeWidth="1.600" /></Svg></WindowButton>
            <WindowButton $close aria-label="Close"><Svg w={10} h={9}><path d="M1.500 1l7 7M8.500 1l-7 7" stroke="#fff" strokeWidth="2.200" /></Svg></WindowButton>
          </WindowButtons>
        </TitleBar>
        <TabRow>
          <Tab $kind="file">File</Tab>
          <Tab $kind="active">Home</Tab>
          {['Insert', 'Page Layout', 'References', 'Mailings', 'Review', 'View'].map((t) => <Tab key={t}>{t}</Tab>)}
          <TabTools>
            <button aria-label="Collapse ribbon"><Svg w={9} h={7}><path d="M1 5.500L4.500 2 8 5.500z" stroke="#555" fill="#fff" /></Svg></button>
            <button aria-label="Help"><Help /></button>
          </TabTools>
        </TabRow>
      </Frame>

      <Ribbon>
        <Group $w={133}>
          <GroupBody $tight>
            <PasteButton><PasteIcon /><span>Paste</span><Svg w={5} h={10}><path d="M0 4h5L2.500 7z" fill="#666" /></Svg></PasteButton>
            <Stack $indent>
              <SmallButton $dim><CutIcon />Cut</SmallButton>
              <SmallButton $dim><CopyIcon />Copy</SmallButton>
              <SmallButton><PainterIcon />Format Painter</SmallButton>
            </Stack>
          </GroupBody>
          <Footer label="Clipboard" />
        </Group>

        <Group $w={238}>
          <GroupBody>
            <Stack>
              <ToolRow>
                <ComboBox><Combo $w={87} aria-label="Font"><option>Book Antiqua</option></Combo><Down /></ComboBox>
                <ComboBox><Combo $w={37} aria-label="Font size"><option>10</option></Combo><Down /></ComboBox>
                <ToolButton $w={22} aria-label="Grow font"><Glyph $size={15}>A<sup>▴</sup></Glyph></ToolButton>
                <ToolButton $w={18} aria-label="Shrink font"><Glyph $size={12}>A<sup>▾</sup></Glyph></ToolButton>
                <Divider $m={3} />
                <ToolButton $w={29}><Glyph $size={13}>Aa</Glyph><Down /></ToolButton>
                <Divider $m={3} />
                <ToolButton $w={24} aria-label="Clear formatting"><ClearFormat /></ToolButton>
              </ToolRow>
              <ToolRow>
                <ToolButton><Glyph>B</Glyph></ToolButton>
                <ToolButton><Glyph $italic>I</Glyph></ToolButton>
                <ToolButton $w={33}><Glyph $line="underline">U</Glyph><Down /></ToolButton>
                <ToolButton><Glyph $size={11} $line="line-through">abc</Glyph></ToolButton>
                <ToolButton $w={21}><Glyph $size={13}>x<sub>2</sub></Glyph></ToolButton>
                <ToolButton $w={21}><Glyph $size={13}>x<sup>2</sup></Glyph></ToolButton>
                <Divider $m={2} />
                <ToolButton $w={30} aria-label="Text effects"><TextEffects /><Down /></ToolButton>
                <ToolButton $w={30} aria-label="Highlight"><Highlighter /><Down /></ToolButton>
                <ToolButton $w={28} aria-label="Font color"><FontColor /><Down /></ToolButton>
              </ToolRow>
            </Stack>
          </GroupBody>
          <Footer label="Font" />
        </Group>

        <Group $w={250}>
          <GroupBody>
            <Stack>
              <ToolRow>
                <ToolButton $w={30} aria-label="Bullets"><Bullets /><Down /></ToolButton>
                <ToolButton $w={31} aria-label="Numbering"><Numbering /><Down /></ToolButton>
                <ToolButton $w={28} aria-label="Multilevel list"><Multilevel /><Down /></ToolButton>
                <Divider $m={3} />
                <ToolButton aria-label="Decrease indent"><Indent out /></ToolButton>
                <ToolButton aria-label="Increase indent"><Indent /></ToolButton>
                <Divider $m={3} />
                <ToolButton $on aria-label="Left to right"><Direction /></ToolButton>
                <ToolButton aria-label="Right to left"><Direction rtl /></ToolButton>
                <Divider $m={3} />
                <ToolButton $w={22} aria-label="Sort"><SortIcon /></ToolButton>
                <Divider $m={4} />
                <ToolButton aria-label="Show marks"><Pilcrow /></ToolButton>
              </ToolRow>
              <ToolRow>
                <ToolButton $on $w={21} aria-label="Align left"><Bars rows={[[0, 13], [0, 9], [0, 13], [0, 9], [0, 13]]} /></ToolButton>
                <ToolButton $w={21} aria-label="Center"><Bars rows={[[0, 13], [2, 9], [0, 13], [2, 9], [0, 13]]} /></ToolButton>
                <ToolButton $w={21} aria-label="Align right"><Bars rows={[[0, 13], [4, 9], [0, 13], [4, 9], [0, 13]]} /></ToolButton>
                <ToolButton $w={21} aria-label="Justify"><Bars rows={[[0, 13], [0, 13], [0, 13], [0, 13], [0, 13]]} /></ToolButton>
                <Divider $m={3} />
                <ToolButton $w={28} aria-label="Line spacing"><Spacing /><Down /></ToolButton>
                <Divider $m={3} />
                <ToolButton $w={30} aria-label="Shading"><Shading /><Down /></ToolButton>
                <ToolButton $w={28} aria-label="Borders"><Borders /><Down /></ToolButton>
              </ToolRow>
            </Stack>
          </GroupBody>
          <Footer label="Paragraph" />
        </Group>

        <Group>
          <GroupBody>
            <Gallery>
              {tiles.map((t, i) => (
                <StyleTile key={i} $on={t.on}>
                  <Preview $font={t.font} $size={t.size} $color={t.color} $bold={t.bold} $italic={t.italic}>{t.sample}</Preview>
                  <TileLabel>{t.name}</TileLabel>
                </StyleTile>
              ))}
              <GalleryScroll>
                <button aria-label="Previous styles"><Svg w={5} h={3}><path d="M0 3h5L2.500 0z" fill="#bbb" /></Svg></button>
                <button aria-label="Next styles"><Down /></button>
                <button aria-label="More styles"><MoreIcon /></button>
              </GalleryScroll>
            </Gallery>
            <ChangeStyles>
              <ChangeStylesIcon />
              <span>Change</span>
              <StylesLabel>Styles <Down /></StylesLabel>
            </ChangeStyles>
          </GroupBody>
          <Footer label="Styles" />
        </Group>

        <Group $w={66}>
          <GroupBody $tight>
            <Stack>
              <SmallButton><Binoculars />Find <Down /></SmallButton>
              <SmallButton><ReplaceIcon />Replace</SmallButton>
              <SmallButton><Cursor />Select <Down /></SmallButton>
            </Stack>
          </GroupBody>
          <Footer label="Editing" launcher={false} />
        </Group>
        <RibbonEnd />
      </Ribbon>

      <Workspace>
        <Corner aria-label="Tab stop type"><Svg w={13} h={13}><rect width="13" height="13" fill="#fff" /><path d="M.5.5h12v12H.5z" stroke="#a9adb5" /><path d="M5 4v5h4" stroke="#222" strokeWidth="2" /></Svg></Corner>
        <RulerRow><HRuler /></RulerRow>
        <Scrollbar>
          <SplitHandle />
          <RulerToggle aria-label="View ruler"><Svg w={11} h={11}><path d="M1.500 1.500h5l3 2v6h-5l-3-2z" stroke="#666" strokeDasharray="2 1" /><path d="M4 4h3v4" stroke="#666" /></Svg></RulerToggle>
          <button aria-label="Scroll up"><Svg w={8} h={4}><path d="M0 4h8L4 0z" fill="#333b4a" /></Svg></button>
          <Space $grow={185} />
          <Thumb><Svg w={7} h={7}><path d="M0 1h7M0 3.500h7M0 6h7" stroke="#7a8392" /></Svg></Thumb>
          <Space $grow={261} />
          <button aria-label="Scroll down"><Svg w={8} h={4}><path d="M0 0h8L4 4z" fill="#333b4a" /></Svg></button>
          <button aria-label="Previous page"><Svg w={6} h={8}><path d="M0 4l3-3 3 3zM0 8l3-3 3 3z" fill="#3566c0" /></Svg></button>
          <button aria-label="Browse object"><Svg w={8} h={8}><circle cx="4" cy="4" r="3" stroke="#777f8c" strokeWidth="1.300" fill="#e8ecf2" /></Svg></button>
          <button aria-label="Next page"><Svg w={6} h={8}><path d="M0 0l3 3 3-3zM0 4l3 3 3-3z" fill="#3566c0" /></Svg></button>
        </Scrollbar>
        <SideRuler><VRuler /></SideRuler>
        <Canvas>
          <Paper>
            <VerseColumn>{leftLines.map((t) => <Verse key={t} text={t} />)}</VerseColumn>
            <VerseColumn>{middleLines.map((t) => <Verse key={t} text={t} />)}</VerseColumn>
            <DottedRule />
            <Translation>
              {translation.map(([level, text, no], i) => (
                <Line key={i} $in={level}>
                  {no && <VerseNo>{no}</VerseNo>}
                  {text[0] === '@' && (
                    <PasteBadge aria-label="Autocorrect options"><Svg w={15} h={14}><path d="M1.500 3h11" stroke="#2a35b0" strokeWidth="2" /><path d="M3 7L12 3.500 6.500 9h5L4 12.500" stroke="#222" strokeWidth="1.300" /></Svg></PasteBadge>
                  )}
                  <Rich text={text.replace('@', '')} />
                </Line>
              ))}
            </Translation>
          </Paper>
        </Canvas>
      </Workspace>

      <StatusBar>
        <StatusItem>Page: 2 of 3</StatusItem>
        <StatusItem>Words: 1.276</StatusItem>
        <ProofButton aria-label="Proofing"><ProofIcon /></ProofButton>
        <StatusItem>Croatian (Croatia)</StatusItem>
        <ViewButtons>
          <ViewButton $on aria-label="Print layout"><Svg w={11} h={11}><path d="M.5.5h10v10H.5z" fill="#fff" stroke="#7c6a3a" /><path d="M2 3h7M2 5h7M2 7h7M2 9h7" stroke="#7c6a3a" strokeWidth=".8" /></Svg></ViewButton>
          <ViewButton aria-label="Full screen reading"><Svg w={11} h={10}><path d="M.5 1.500l5 1 5-1v7l-5 1-5-1zM5.500 2.500v7" stroke="#777" fill="#f4f4f4" /><path d="M2 4l2 .5M2 6l2 .5M7 4.500L9 4M7 6.500L9 6" stroke="#777" strokeWidth=".8" /></Svg></ViewButton>
          <ViewButton aria-label="Web layout"><Svg w={12} h={11}><path d="M.5.5h9v9h-9z" fill="#f4f4f4" stroke="#777" /><path d="M2 3h6M2 5h6" stroke="#777" /><circle cx="8.500" cy="7.500" r="3" fill="#3f77b8" stroke="#2b5488" /></Svg></ViewButton>
          <ViewButton aria-label="Outline"><Svg w={10} h={10}><path d="M1 1.500h8M4 4h5M4 6.500h5M1 9h8" stroke="#777" /></Svg></ViewButton>
          <ViewButton aria-label="Draft"><Svg w={10} h={10}><path d="M0 1h10M0 3.500h10M0 6h10M0 8.500h10" stroke="#777" /></Svg></ViewButton>
        </ViewButtons>
        <ZoomLabel>130%</ZoomLabel>
        <ZoomTools>
          <button aria-label="Zoom out"><Svg w={14} h={14}><circle cx="7" cy="7" r="6" fill="#f2f3f5" stroke="#7d828a" /><path d="M3.500 7h7" stroke="#444" strokeWidth="1.600" /></Svg></button>
          <ZoomSlider type="range" min={0} max={100} defaultValue={54} aria-label="Zoom" />
          <button aria-label="Zoom in"><Svg w={14} h={14}><circle cx="7" cy="7" r="6" fill="#f2f3f5" stroke="#7d828a" /><path d="M3.500 7h7M7 3.500v7" stroke="#444" strokeWidth="1.600" /></Svg></button>
        </ZoomTools>
      </StatusBar>

      <TaskBar>
        <StartButton aria-label="Start"><Orb /></StartButton>
        <TaskButton $open aria-label="Chrome"><Chrome /></TaskButton>
        <TaskButton $open aria-label="Firefox"><Firefox /></TaskButton>
        <TaskButton aria-label="Media Player"><MediaPlayer /></TaskButton>
        <TaskButton aria-label="Internet Explorer"><Explorer /></TaskButton>
        <TaskButton aria-label="Announcements"><Megaphone /></TaskButton>
        <TaskButton $open aria-label="File manager"><Folder /></TaskButton>
        <TaskButton aria-label="Chat"><ChatR /></TaskButton>
        <TaskButton aria-label="TeamViewer"><TeamViewer /></TaskButton>
        <TaskButton aria-label="Petals"><Petals /></TaskButton>
        <TaskButton $open $stack aria-label="Notebook"><Notebook /></TaskButton>
        <TaskButton $open $front $stack aria-label="Word"><OfficeTile c="#2a5699" d="M4.500 6l3 12 4-10.500 3.500 10.500L18.500 6" /></TaskButton>
        <TaskButton $open aria-label="Publisher"><OfficeTile c="#1b8a72" d="M7.500 21V7h4.500c6 0 6 7.500 0 7.500H8" /></TaskButton>
        <Tray>
          <Language>HR</Language>
          <button aria-label="Show hidden icons"><Svg w={8} h={4}><path d="M0 4h8L4 0z" fill="#fff" /></Svg></button>
          <button aria-label="Action center"><Svg w={15} h={14}><path d="M1.500 0v13" stroke="#fff" strokeWidth="1.500" /><path d="M2 1c3-1.500 5 1.500 9 0v7c-4 1.500-6-1.500-9 0z" fill="#f4f6fa" /><circle cx="10" cy="9.500" r="4" fill="#d8341e" /><path d="M8.300 7.800l3.400 3.400M11.700 7.800l-3.400 3.400" stroke="#fff" strokeWidth="1.400" /></Svg></button>
          <button aria-label="Network"><Svg w={13} h={12}><path d="M1.200 12v-2M4 12V8M6.800 12V5.500M9.500 12V3" stroke="#fff" strokeWidth="1.800" /><path d="M12.200 12V0" stroke="#8ea7c8" strokeWidth="1.500" /></Svg></button>
          <button aria-label="Volume"><Svg w={14} h={12}><path d="M0 4h2.500L6.500.5v11L2.500 8H0z" fill="#fff" /><path d="M8.500 4c1 1.300 1 2.700 0 4M10.300 2.500c2 2.300 2 4.700 0 7M12 1c2.600 3.300 2.600 6.700 0 10" stroke="#dbe6f4" /></Svg></button>
          <Clock>12:39<br />3.9.2013.</Clock>
          <ShowDesktop aria-label="Show desktop" />
        </Tray>
      </TaskBar>
    </Shell>
  );
}
